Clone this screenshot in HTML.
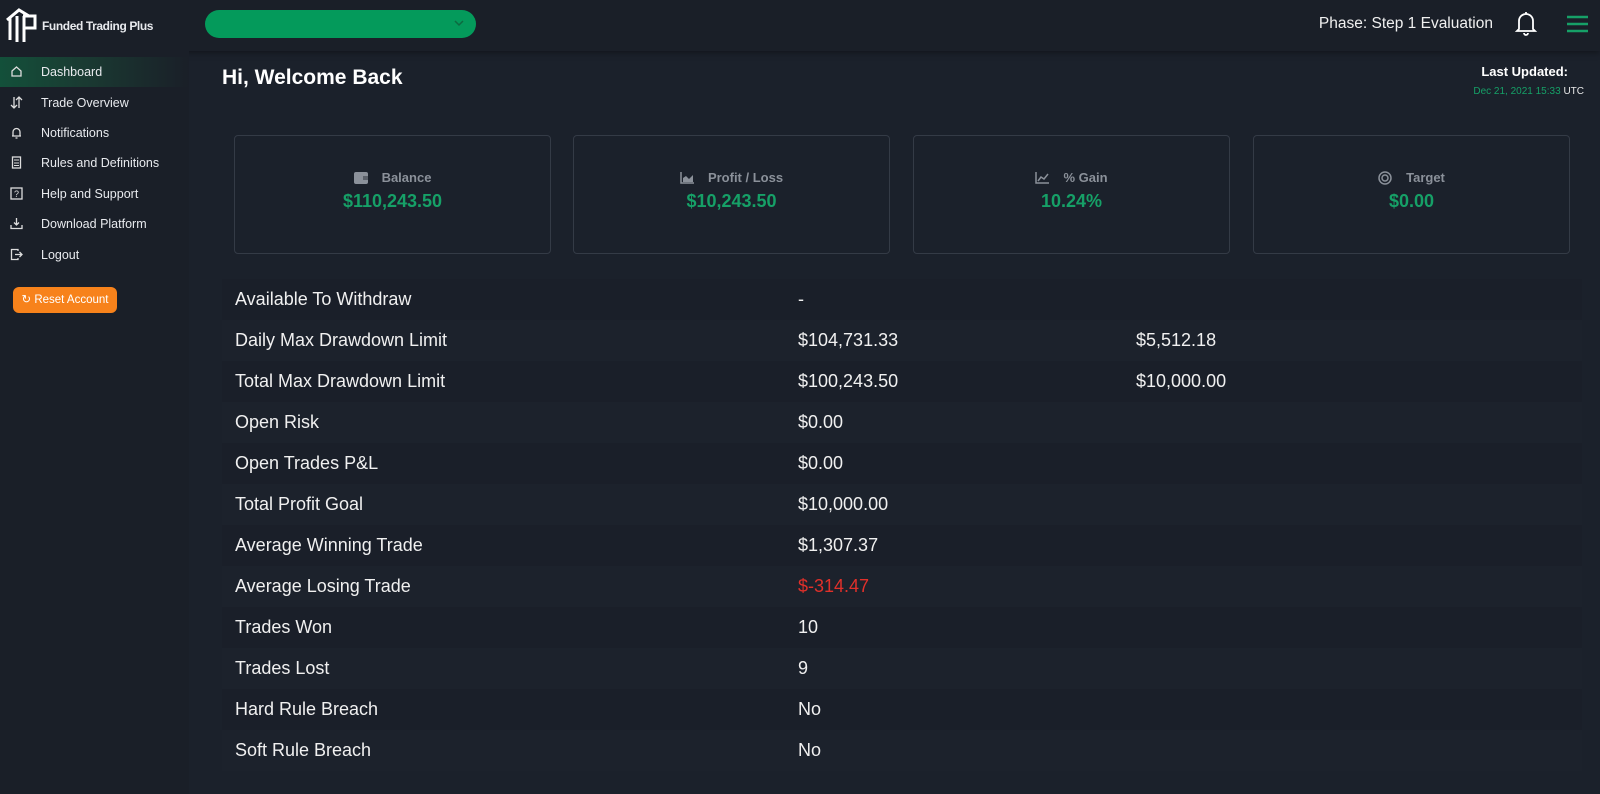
<!DOCTYPE html>
<html><head><meta charset="utf-8"><style>
*{box-sizing:border-box;margin:0;padding:0}
body{width:1600px;height:794px;background:#1b212b;font-family:"Liberation Sans",sans-serif;color:#e8eaee;position:relative;overflow:hidden}
.hdr{position:absolute;left:0;top:0;width:1600px;height:51px;background:#1a1f28;box-shadow:0 2px 6px rgba(0,0,0,.35)}
.side{position:absolute;left:0;top:51px;width:189px;height:743px;background:#1a1f28}
.logo{position:absolute;left:5px;top:6px}
.logotxt{position:absolute;left:42px;top:19px;font-size:12px;font-weight:bold;color:#e8eaee;letter-spacing:-.4px}
.dd{position:absolute;left:205px;top:10px;width:271px;height:28px;border-radius:14px;background:#049a5b}
.dd svg{position:absolute;right:12px;top:9px}
.phase{position:absolute;right:107px;top:15px;font-size:15.5px;color:#f0f0f0}
.nav{position:absolute;left:0;height:30px;width:189px;font-size:12.5px;color:#e8eaee}
.nav span{position:absolute;left:41px;top:8px}
.nav svg{position:absolute;left:10px;top:8px}
.act{background:linear-gradient(90deg,#13503a 0%,#1a3a32 45%,rgba(26,31,40,0) 100%)}
.reset{position:absolute;left:13px;top:287px;width:104px;height:26px;border-radius:6px;background:#f7821b;color:#fff;font-size:11.5px;text-align:center;line-height:26px}
h1{position:absolute;left:222px;top:66px;font-size:21px;font-weight:bold;color:#fff}
.lu{position:absolute;right:32px;top:64px;font-size:13px;font-weight:bold;color:#fff}
.dt{position:absolute;right:16px;top:86px;font-size:10px;color:#16a067}
.dt b{color:#e8e8e8;font-weight:normal}
.card{position:absolute;top:135px;width:317px;height:119px;border:1px solid #343b46;border-radius:4px;text-align:center}
.card .t{margin-top:34px;font-size:13px;color:#8b919a;font-weight:bold;display:flex;justify-content:center;align-items:center;gap:14px}
.card .v{margin-top:6px;font-size:18px;color:#16a067;font-weight:bold}
.tbl{position:absolute;left:222px;top:279px;width:1360px}
.r{height:41px;position:relative;font-size:18px;color:#f0f0f0}
.r:nth-child(odd){background:#1a1f29}
.r:nth-child(even){background:#1c222c}
.r span{position:absolute;top:10px}
.a{left:13px}.b{left:576px}.c{left:914px}
</style></head><body>
<div class="hdr">
<svg class="logo" width="34" height="36" viewBox="0 0 34 36"><path d="M2 14 L14 4 L24 10 M5 12 V34 M12 10 V36 M18 10 H30 V22 H19 M19 10 V36" stroke="#fff" stroke-width="3" fill="none"/></svg>
<div class="logotxt">Funded Trading Plus</div>
<div class="dd"><svg width="10" height="8" viewBox="0 0 10 8"><path d="M1 2 L5 6 L9 2" stroke="#0d6a40" stroke-width="1.5" fill="none"/></svg></div>
<div class="phase">Phase: Step 1 Evaluation</div>
<svg style="position:absolute;left:1514px;top:10px" width="24" height="26" viewBox="0 0 24 26"><path d="M5 19 V11 A7 7 0 0 1 19 11 V19 L21 21 H3 Z M10 23 A2 2 0 0 0 14 23" stroke="#fff" stroke-width="1.8" fill="none"/><path d="M12 2 V4" stroke="#fff" stroke-width="1.8"/></svg>
<svg style="position:absolute;left:1567px;top:15px" width="21" height="18"><path d="M0 2H21M0 9H21M0 16H21" stroke="#16a067" stroke-width="2.5"/></svg>
</div>
<div class="side"></div>
<div class="nav act" style="top:57px"><svg width="13" height="13" viewBox="0 0 13 13"><path d="M2 6 L6.5 2 L11 6 V11 H2 Z" stroke="#ddd" stroke-width="1.3" fill="none"/></svg><span>Dashboard</span></div>
<div class="nav" style="top:88px"><svg width="13" height="13"><path d="M4 1V12M1 9L4 12L7 9M9 12V1M6 4L9 1L12 4" stroke="#ddd" stroke-width="1.3" fill="none"/></svg><span>Trade Overview</span></div>
<div class="nav" style="top:118px"><svg width="13" height="13"><path d="M3 10V6A3.5 3.5 0 0 1 10 6V10H2H11M5.5 12H7.5" stroke="#ddd" stroke-width="1.3" fill="none"/></svg><span>Notifications</span></div>
<div class="nav" style="top:148px"><svg width="13" height="13"><rect x="2.5" y="1" width="8" height="11" stroke="#ddd" stroke-width="1.3" fill="none"/><path d="M4 4H9M4 7H9M4 9.5H9" stroke="#ddd"/></svg><span>Rules and Definitions</span></div>
<div class="nav" style="top:179px"><svg width="13" height="13"><rect x="1" y="1" width="11" height="11" stroke="#ddd" stroke-width="1.3" fill="none"/><text x="4" y="10" font-size="9" fill="#ddd" font-family="Liberation Sans">?</text></svg><span>Help and Support</span></div>
<div class="nav" style="top:209px"><svg width="13" height="13"><path d="M6.5 1V8M4 5.5L6.5 8L9 5.5M1 8V11.5H12V8" stroke="#ddd" stroke-width="1.3" fill="none"/></svg><span>Download Platform</span></div>
<div class="nav" style="top:240px"><svg width="13" height="13"><path d="M8 3V1.5H1.5V11.5H8V10M5 6.5H12M9.5 4L12 6.5L9.5 9" stroke="#ddd" stroke-width="1.3" fill="none"/></svg><span>Logout</span></div>
<div class="reset">&#x21bb; Reset Account</div>
<h1>Hi, Welcome Back</h1>
<div class="lu">Last Updated:</div>
<div class="dt">Dec 21, 2021 15:33 <b>UTC</b></div>
<div class="card" style="left:234px"><div class="t"><svg width="14" height="12"><rect x="0" y="0" width="14" height="12" rx="2" fill="#8b919a"/><rect x="9" y="4" width="5" height="4" fill="#5b616a"/></svg>Balance</div><div class="v">$110,243.50</div></div>
<div class="card" style="left:573px"><div class="t"><svg width="14" height="12"><path d="M1 0V11H14" stroke="#8b919a" stroke-width="1.5" fill="none"/><path d="M3 10V6L6 4L9 7L13 3V10Z" fill="#8b919a"/></svg>Profit / Loss</div><div class="v">$10,243.50</div></div>
<div class="card" style="left:913px"><div class="t"><svg width="14" height="12"><path d="M1 0V11H14M3 9L6 5L9 7L13 2" stroke="#8b919a" stroke-width="1.5" fill="none"/></svg>% Gain</div><div class="v">10.24%</div></div>
<div class="card" style="left:1253px"><div class="t"><svg width="14" height="14"><circle cx="7" cy="7" r="6" stroke="#8b919a" stroke-width="1.5" fill="none"/><circle cx="7" cy="7" r="3" stroke="#8b919a" stroke-width="1.5" fill="none"/></svg>Target</div><div class="v">$0.00</div></div>
<div class="tbl">
<div class="r"><span class="a">Available To Withdraw</span><span class="b">-</span></div>
<div class="r"><span class="a">Daily Max Drawdown Limit</span><span class="b">$104,731.33</span><span class="c">$5,512.18</span></div>
<div class="r"><span class="a">Total Max Drawdown Limit</span><span class="b">$100,243.50</span><span class="c">$10,000.00</span></div>
<div class="r"><span class="a">Open Risk</span><span class="b">$0.00</span></div>
<div class="r"><span class="a">Open Trades P&amp;L</span><span class="b">$0.00</span></div>
<div class="r"><span class="a">Total Profit Goal</span><span class="b">$10,000.00</span></div>
<div class="r"><span class="a">Average Winning Trade</span><span class="b">$1,307.37</span></div>
<div class="r"><span class="a">Average Losing Trade</span><span class="b" style="color:#e0302a">$-314.47</span></div>
<div class="r"><span class="a">Trades Won</span><span class="b">10</span></div>
<div class="r"><span class="a">Trades Lost</span><span class="b">9</span></div>
<div class="r"><span class="a">Hard Rule Breach</span><span class="b">No</span></div>
<div class="r"><span class="a">Soft Rule Breach</span><span class="b">No</span></div>
</div>
</body></html>
